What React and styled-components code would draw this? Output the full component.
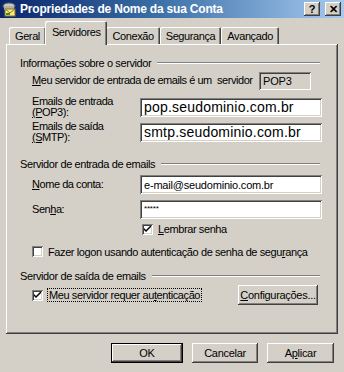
import React from 'react';
import styled, { createGlobalStyle, css } from 'styled-components';

const GlobalStyle = createGlobalStyle`
  html, body {
    margin: 0;
    padding: 0;
    background: #d4d0c8;
  }
  body {
    font-family: "Liberation Sans", Arial, sans-serif;
    font-size: 11px;
    color: #000;
  }
`;

const raised = css`
  box-shadow:
    inset -1px -1px 0 #404040,
    inset 1px 1px 0 #ffffff,
    inset -2px -2px 0 #808080,
    inset 2px 2px 0 #d4d0c8;
`;

const sunken = css`
  box-shadow:
    inset 1px 1px 0 #808080,
    inset -1px -1px 0 #ffffff,
    inset 2px 2px 0 #404040,
    inset -2px -2px 0 #d4d0c8;
`;

const Window = styled.div`
  width: 344px;
  height: 372px;
  background: #d4d0c8;
  display: flex;
  flex-direction: column;
  overflow: hidden;
`;

const TitleBar = styled.div`
  height: 18px;
  flex: none;
  display: flex;
  align-items: center;
  gap: 3px;
  padding: 0 3px 0 2px;
  background: linear-gradient(to right, #0a246a 0%, #3a6ea5 45%, #a6caf0 100%);
`;

const Title = styled.div`
  flex: 1;
  color: #fff;
  font-family: "Liberation Sans", Arial, sans-serif;
  font-weight: bold;
  font-size: 12px;
  letter-spacing: -0.2px;
  white-space: nowrap;
`;

const CaptionButton = styled.div`
  width: 16px;
  height: 14px;
  background: #d4d0c8;
  ${raised};
  display: flex;
  align-items: center;
  justify-content: center;
  font-weight: bold;
  font-size: 11px;
  line-height: 1;
  margin-left: ${p => p.$gap ? '2px' : '0'};
`;

const TabStrip = styled.div`
  display: flex;
  align-items: flex-end;
  flex: none;
  height: 21px;
  margin-top: 5px;
  padding-left: 9px;
  position: relative;
  z-index: 1;
`;

const Tab = styled.div`
  height: ${p => p.$active ? '21px' : '17px'};
  padding: 0 ${p => p.$active ? '7px' : '6px'};
  margin: 0 ${p => p.$active ? '-1px' : '0'};
  margin-bottom: ${p => p.$active ? '-1px' : '0'};
  display: flex;
  align-items: center;
  background: #d4d0c8;
  border-radius: 2px 2px 0 0;
  box-shadow:
    inset 1px 1px 0 #ffffff,
    inset -1px 0 0 #404040,
    inset -2px 0 0 #808080;
  white-space: nowrap;
  letter-spacing: -0.4px;
  padding-bottom: ${p => p.$active ? '3px' : '0'};
  z-index: ${p => p.$active ? 2 : 1};
`;

const Panel = styled.div`
  margin: 0 6px;
  height: 290px;
  flex: none;
  box-sizing: border-box;
  padding: 12px 14px 0 14px;
  ${raised};
  display: flex;
  flex-direction: column;
`;

const GroupHead = styled.div`
  display: flex;
  align-items: center;
  gap: 6px;
  height: 13px;
  letter-spacing: -0.4px;
  white-space: nowrap;

  &::after {
    content: '';
    flex: 1;
    height: 0;
    border-top: 1px solid #808080;
    border-bottom: 1px solid #ffffff;
    margin-right: 4px;
  }
`;

const Row = styled.div`
  display: flex;
  align-items: center;
  height: ${p => p.$h ?? 19}px;
  margin-top: ${p => p.$mt ?? 0}px;
  padding-left: ${p => p.$indent ?? 12}px;
  padding-right: ${p => p.$right ?? 0}px;
`;

const Label = styled.div`
  width: ${p => p.$w ? `${p.$w}px` : 'auto'};
  flex: none;
  letter-spacing: -0.45px;
  line-height: 11px;
  white-space: nowrap;
`;

const U = styled.span`
  text-decoration: underline;
`;

const Field = styled.div`
  width: ${p => p.$w ?? 182}px;
  height: ${p => p.$h ?? 19}px;
  box-sizing: border-box;
  padding: 0 4px;
  background: ${p => p.$readonly ? '#d4d0c8' : '#ffffff'};
  ${sunken};
  display: flex;
  align-items: ${p => p.$top ? 'flex-start' : 'center'};
  padding-top: ${p => p.$top ? '4px' : '0'};
  font-size: ${p => p.$size ?? 11}px;
  letter-spacing: ${p => p.$size === 14 ? '0.2px' : '-0.2px'};
  white-space: nowrap;
  overflow: hidden;
`;

const Spacer = styled.div`
  flex: 1;
`;

const CheckRow = styled.div`
  display: flex;
  align-items: center;
  gap: 5px;
  height: ${p => p.$h ?? 13}px;
  margin-top: ${p => p.$mt ?? 0}px;
  padding-left: ${p => p.$indent ?? 12}px;
  letter-spacing: -0.4px;
  white-space: nowrap;
`;

const Box = styled.div`
  width: 11px;
  height: 11px;
  box-sizing: border-box;
  background: #fff;
  ${sunken};
  display: flex;
  align-items: center;
  justify-content: center;
  flex: none;
`;

const Focus = styled.span`
  outline: 1px dotted #000;
  padding: 0 1px;
`;

const Button = styled.div`
  width: ${p => p.$w}px;
  height: ${p => p.$h ?? 20}px;
  box-sizing: border-box;
  display: flex;
  align-items: center;
  justify-content: center;
  background: #d4d0c8;
  letter-spacing: -0.3px;
  ${raised};
  ${p => p.$default && css`
    box-shadow:
      inset 0 0 0 1px #000,
      inset -2px -2px 0 #404040,
      inset 2px 2px 0 #ffffff,
      inset -3px -3px 0 #808080;
  `}
`;

const Footer = styled.div`
  display: flex;
  justify-content: flex-end;
  gap: 9px;
  padding: 9px 10px 0 0;
`;

const Gap = styled.div`
  height: ${p => p.$h}px;
  flex: none;
`;

const Check = () => (
  <svg width="7" height="7" viewBox="0 0 7 7">
    <path d="M0 2 L0 4 L2 6 L7 1 L7 -1 L2 4 Z" fill="#000" />
  </svg>
);

const AccountIcon = () => (
  <svg width="15" height="15" viewBox="0 0 15 15">
    <ellipse cx="7" cy="4" rx="6" ry="3" fill="#c8c8c8" stroke="#606060" />
    <rect x="2" y="4" width="10" height="4" fill="#b0b0b0" />
    <rect x="3" y="7" width="10" height="7" fill="#ffe680" stroke="#8a7a20" />
    <path d="M3 7 L8 11 L13 7" fill="none" stroke="#8a7a20" />
    <rect x="4" y="11" width="4" height="2" fill="#3a8a3a" />
  </svg>
);

const App = () => (
  <>
    <GlobalStyle />
    <Window>
      <TitleBar>
        <AccountIcon />
        <Title>Propriedades de Nome da sua Conta</Title>
        <CaptionButton>?</CaptionButton>
        <CaptionButton $gap>✕</CaptionButton>
      </TitleBar>

      <TabStrip>
        <Tab>Geral</Tab>
        <Tab $active>Servidores</Tab>
        <Tab>Conexão</Tab>
        <Tab>Segurança</Tab>
        <Tab>Avançado</Tab>
      </TabStrip>

      <Panel>
        <GroupHead>Informações sobre o servidor</GroupHead>
        <Row $mt={2} $h={19} $right={13}>
          <Label><U>M</U>eu servidor de entrada de emails é um&nbsp; servidor</Label>
          <Spacer />
          <Field $w={52} $h={18} $readonly>POP3</Field>
        </Row>
        <Row $mt={6} $h={22}>
          <Label $w={108}>Emails de entrada<br /><U>(P</U>OP3):</Label>
          <Field $size={14}>pop.seudominio.com.br</Field>
        </Row>
        <Row $mt={3} $h={22}>
          <Label $w={108}>Emails de saída<br /><U>(S</U>MTP):</Label>
          <Field $size={14}>smtp.seudominio.com.br</Field>
        </Row>

        <Gap $h={14} />
        <GroupHead>Servidor de entrada de emails</GroupHead>
        <Row $mt={5}>
          <Label $w={108}><U>N</U>ome da conta:</Label>
          <Field>e-mail@seudominio.com.br</Field>
        </Row>
        <Row $mt={6}>
          <Label $w={108}>Sen<U>h</U>a:</Label>
          <Field $size={8} $top>*****</Field>
        </Row>
        <CheckRow $indent={122} $mt={4} $h={12}>
          <Box><Check /></Box>
          <span><U>L</U>embrar senha</span>
        </CheckRow>
        <CheckRow $mt={10}>
          <Box />
          <span>Fazer logon usando autenticação de senha de segu<U>r</U>ança</span>
        </CheckRow>

        <Gap $h={11} />
        <GroupHead>Servidor de saída de emails</GroupHead>
        <Row $mt={3} $h={20} $right={6}>
          <CheckRow $indent={0}>
            <Box><Check /></Box>
            <Focus>Meu servidor requer au<U>t</U>enticação</Focus>
          </CheckRow>
          <Spacer />
          <Button $w={80}><U>C</U>onfigurações...</Button>
        </Row>
      </Panel>

      <Footer>
        <Button $w={72} $default>OK</Button>
        <Button $w={66}>Cancelar</Button>
        <Button $w={67}>A<U>p</U>licar</Button>
      </Footer>
    </Window>
  </>
);

export default App;
